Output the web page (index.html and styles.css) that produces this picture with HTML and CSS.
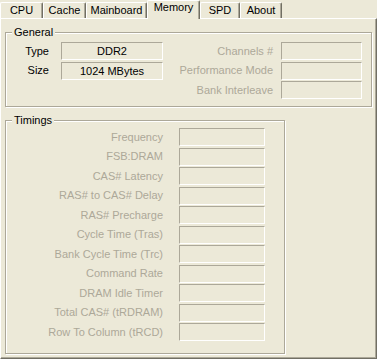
FILE: index.html
```html
<!DOCTYPE html>
<html lang="en">
<head>
    <meta charset="UTF-8">
    <title>Memory</title>
    <link rel="stylesheet" href="styles.css">
</head>
<body>

    <div class="tabs">
        <div class="tab" style="width: 43px">CPU</div>
        <div class="tab" style="width: 43px">Cache</div>
        <div class="tab" style="width: 61px">Mainboard</div>
        <div class="tab selected" style="width: 53px">Memory</div>
        <div class="tab" style="width: 40px">SPD</div>
        <div class="tab" style="width: 42px">About</div>
    </div>

    <div class="page">

        <!-- General -->
        <div class="group general">
            <span class="legend">General</span>
            <div class="col-left">
                <span class="label">Type</span>
                <div class="field">DDR2</div>
                <span class="label">Size</span>
                <div class="field">1024 MBytes</div>
            </div>
            <div class="col-right">
                <span class="label disabled">Channels #</span>
                <div class="field"></div>
                <span class="label disabled">Performance Mode</span>
                <div class="field"></div>
                <span class="label disabled">Bank Interleave</span>
                <div class="field"></div>
            </div>
        </div>

        <!-- Timings -->
        <div class="group timings">
            <span class="legend">Timings</span>
            <span class="label disabled">Frequency</span>
            <div class="field"></div>
            <span class="label disabled">FSB:DRAM</span>
            <div class="field"></div>
            <span class="label disabled">CAS# Latency</span>
            <div class="field"></div>
            <span class="label disabled">RAS# to CAS# Delay</span>
            <div class="field"></div>
            <span class="label disabled">RAS# Precharge</span>
            <div class="field"></div>
            <span class="label disabled">Cycle Time (Tras)</span>
            <div class="field"></div>
            <span class="label disabled">Bank Cycle Time (Trc)</span>
            <div class="field"></div>
            <span class="label disabled">Command Rate</span>
            <div class="field"></div>
            <span class="label disabled">DRAM Idle Timer</span>
            <div class="field"></div>
            <span class="label disabled">Total CAS# (tRDRAM)</span>
            <div class="field"></div>
            <span class="label disabled">Row To Column (tRCD)</span>
            <div class="field"></div>
        </div>

    </div>

</body>
</html>
```

FILE: styles.css
```css
body {
    font-family: "Liberation Sans", Arial, sans-serif;
    font-size: 11px;
    line-height: 13px;
    color: #000;
    background-color: #ece9d8;
    margin: 0;
    padding: 0;
}

/* Tab strip */
.tabs {
    display: flex;
    align-items: flex-start;
    height: 18px;
}

.tab {
    box-sizing: border-box;
    height: 16px;
    margin-top: 2px;
    padding-top: 1px;
    text-align: center;
    border-top: 1px solid #fff;
    border-left: 1px solid #fff;
    border-right: 1px solid #716f64;
    border-radius: 2px 2px 0 0;
    box-shadow: inset -1px 0 0 #aca899;
    background-color: #ece9d8;
}

.tab.selected {
    position: relative;
    z-index: 1;
    height: 19px;
    margin-top: 0;
    padding-top: 0;
}

/* Tab page */
.page {
    box-sizing: border-box;
    height: 341px;
    padding: 0 4px;
    border-top: 1px solid #fff;
    border-left: 1px solid #fff;
    border-right: 1px solid #716f64;
    border-bottom: 1px solid #716f64;
    box-shadow: inset -1px -1px 0 #aca899;
}

.group {
    position: relative;
    box-sizing: border-box;
    border: 1px solid #aca899;
    box-shadow: inset 1px 1px 0 #fff, 1px 1px 0 #fff;
}

.legend {
    position: absolute;
    top: -7px;
    left: 6px;
    padding: 0 2px;
    background-color: #ece9d8;
}

.general {
    display: flex;
    justify-content: space-between;
    width: 367px;
    height: 75px;
    margin-top: 13px;
    padding: 9px 9px 0 0;
}

.col-left {
    display: grid;
    grid-template-columns: 43px 102px;
    grid-auto-rows: 18px;
    column-gap: 12px;
    row-gap: 1.5px;
    align-items: center;
    align-content: start;
}

.col-right {
    display: grid;
    grid-template-columns: 100px 81px;
    grid-auto-rows: 18px;
    column-gap: 8px;
    row-gap: 1.5px;
    align-items: center;
    align-content: start;
}

.timings {
    display: grid;
    grid-template-columns: 157px 86px;
    grid-auto-rows: 18px;
    column-gap: 16px;
    row-gap: 1.5px;
    align-items: center;
    align-content: start;
    width: 280px;
    height: 234px;
    margin-top: 13px;
    padding-top: 7px;
}

.label {
    text-align: right;
    white-space: nowrap;
}

.label.disabled {
    color: #aca899;
}

.field {
    box-sizing: border-box;
    height: 18px;
    padding-top: 2px;
    text-align: center;
    border-top: 1px solid #aca899;
    border-left: 1px solid #aca899;
    border-right: 1px solid #fff;
    border-bottom: 1px solid #fff;
}
```
